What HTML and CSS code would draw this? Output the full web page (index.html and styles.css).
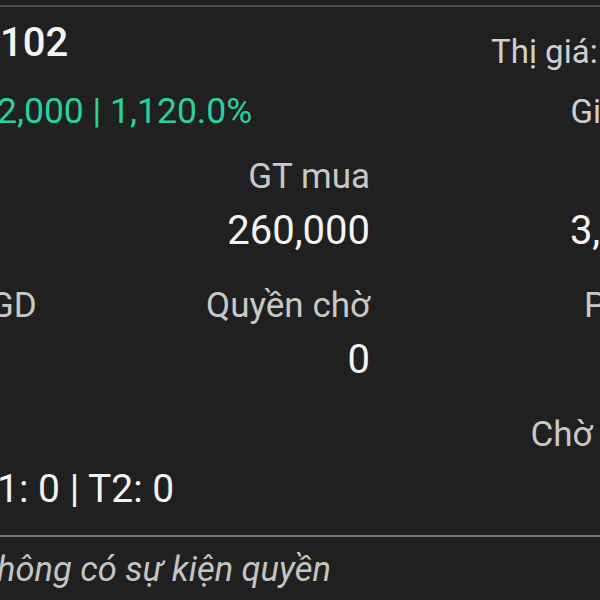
FILE: index.html
```html
<!DOCTYPE html>
<html lang="vi">
<head>
  <meta charset="UTF-8">
  <meta name="viewport" content="width=device-width, initial-scale=1.0">
  <title>Tài sản</title>
  <link rel="stylesheet" href="styles.css">
</head>
<body>
  <div class="panel">
    <div class="head">
      <div class="account">102</div>
      <div class="quote">Thị giá: <span class="quote-value">126,000</span></div>
    </div>
    <div class="head second">
      <div class="profit">2,000 | 1,120.0%</div>
      <div class="quote">Giá: 100,600</div>
    </div>

    <div class="fields">
      <div class="field"></div>
      <div class="field right">
        <span class="label">GT mua</span>
        <span class="value">260,000</span>
      </div>
      <div class="field right">
        <span class="label">GT bán</span>
        <span class="value">3,380,000</span>
      </div>

      <div class="field">
        <span class="label cut">GD</span>
      </div>
      <div class="field right">
        <span class="label">Quyền chờ</span>
        <span class="value">0</span>
      </div>
      <div class="field right">
        <span class="label">Phong tỏa</span>
        <span class="value">0</span>
      </div>

      <div class="field wide">
        <span class="label">&nbsp;</span>
        <span class="value pending">1: 0 | T2: 0</span>
      </div>
      <div class="field right">
        <span class="label">Chờ giao dịch</span>
        <span class="value">0</span>
      </div>
    </div>

    <div class="events">hông có sự kiện quyền</div>
  </div>
</body>
</html>
```

FILE: styles.css
```css
body {
  margin: 0;
  background: #202020;
  font-family: Roboto, "Noto Sans", sans-serif;
  overflow: hidden;
}
.panel {
  width: 750px;
  margin-top: 5px;
  margin-left: -3px;
  padding-top: 12px;
  border-top: 2px solid #4b4b4b;
}
.head {
  display: flex;
  justify-content: space-between;
  align-items: flex-start;
  height: 48px;
}
.head.second {
  margin-top: 20px;
  align-items: baseline;
}
.account {
  font-size: 40px;
  font-weight: 500;
  line-height: 48px;
  color: #f4f4f4;
  padding-left: 3px;
}
.quote {
  font-size: 33px;
  line-height: 48px;
  color: #cfcfcf;
  margin-top: 7px;
  margin-right: 2px;
  white-space: nowrap;
}
.head.second .quote {
  margin-top: 0;
  margin-right: -6px;
}
.quote-value {
  font-size: 39px;
  color: #f4f4f4;
}
.profit {
  font-size: 35.5px;
  line-height: 48px;
  color: #27d39c;
}
.fields {
  display: grid;
  grid-template-columns: 160px 213px 373px;
  row-gap: 31px;
  margin-top: 22px;
}
.field {
  display: flex;
  flex-direction: column;
  gap: 10px;
}
.field.right {
  align-items: flex-end;
}
.field.wide {
  grid-column: span 2;
}
.label {
  font-size: 35px;
  line-height: 40px;
  color: #c8c8c8;
  white-space: nowrap;
}
.label.cut {
  margin-left: -7px;
}
.value {
  font-size: 40px;
  line-height: 48px;
  color: #f4f4f4;
  white-space: nowrap;
}
.value.pending {
  font-size: 39px;
}
.events {
  margin-top: 22px;
  border-top: 2px solid #727272;
  padding-top: 12px;
  font-size: 34.5px;
  line-height: 40px;
  font-style: italic;
  color: #c4c4c4;
}
```
